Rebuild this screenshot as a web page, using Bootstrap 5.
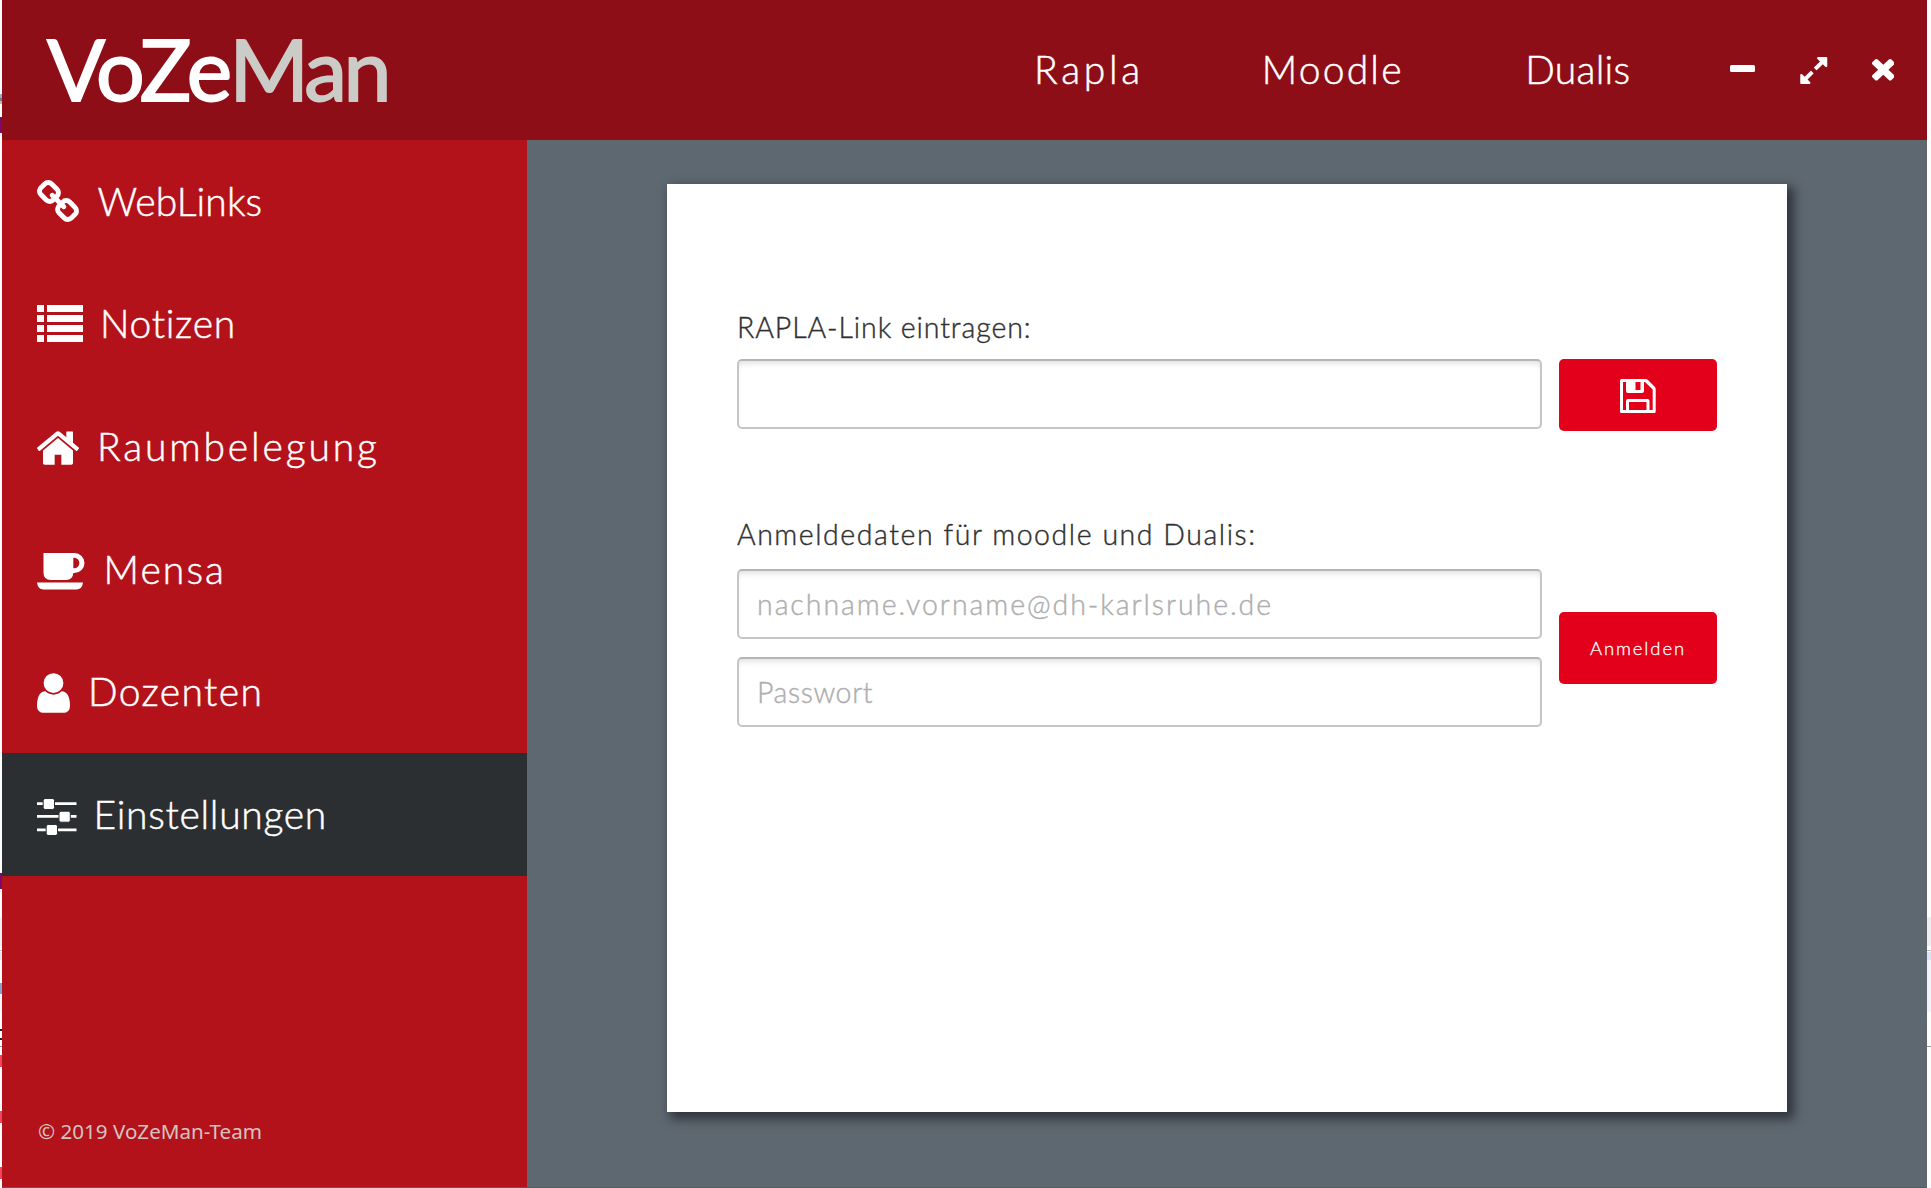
<!DOCTYPE html>
<html lang="de">
<head>
<meta charset="utf-8">
<title>VoZeMan</title>
<link href="https://cdn.jsdelivr.net/npm/bootstrap@5.3.0/dist/css/bootstrap.min.css" rel="stylesheet">
<style>
  body { background: #fff; font-family: Lato, "Liberation Sans", sans-serif; font-weight: 300; overflow: hidden; }
  svg { display: block; flex: none; fill: currentColor; }
  .app-window { width: 1925px; height: 1188px; background: #5e6870; border-bottom: 1px solid #535b63; }
  .edge { flex: none; background-repeat: no-repeat; }
  .edge-left { width: 2px; background-image: linear-gradient(
    #fff 94px, #8fb0c8 94px 98px, #77788c 98px 101px, #d9b98c 101px 104px, #fff 104px 117px,
    #7b0a6a 117px 133px, #fff 133px 873px, #7b0a6a 873px 889px, #fff 889px 917px,
    #f2f2f2 917px 946px, #fff 946px 950px, #bbb 950px 951px, #fff 951px 952px, #e6e8f4 952px 960px,
    #fff 960px 983px, #7fa8cc 983px 994px, #f8f8fc 994px 1012px, #fff 1012px 1029px, #222 1029px 1031px,
    #fff 1031px 1038px, #222 1038px 1040px, #fff 1040px 1046px, #999 1046px 1047px, #fff 1047px 1055px,
    #f0455a 1055px 1067px, #fff 1067px 1111px, #f0455a 1111px 1123px, #fff 1123px 1167px,
    #f0455a 1167px 1179px, #fff 1179px); }
  .edge-right { width: 4px; background-image: linear-gradient(
    #fff 917px, #eee 917px 946px, #fff 946px 950px, #bbb 950px 951px, #fff 951px 952px,
    #dde3f6 952px 960px, #f3f3fb 960px 1012px, #fff 1012px 1046px, #999 1046px 1047px, #fff 1047px); }

  .app-header { height: 140px; background: #8e0e17; color: #fff; padding: 0 32.6px 0 45px; }
  .logo { font-size: 86px; font-weight: 400; line-height: 1; letter-spacing: -2.8px; padding-bottom: 5px; -webkit-text-stroke: 1.8px; }
  .logo-grey { color: #cbcbc7; letter-spacing: -3.6px; }
  .top-link { color: #fff; font-size: 39px; line-height: 1.2; text-decoration: none; padding-bottom: 1px; -webkit-text-stroke: .5px; }
  .top-rapla { width: 227.7px; letter-spacing: 3.7px; }
  .top-moodle { width: 263.5px; letter-spacing: 2.2px; }
  .top-dualis { width: 204.6px; letter-spacing: .3px; }
  .win-btn { color: #fff; }

  .side { width: 525px; background: #b4121b; flex: none; }
  .side .nav-link { height: 122.6px; padding: 0 0 0 35px; gap: 17px; color: #fff; font-size: 39px; line-height: 1.2; -webkit-text-stroke: .5px; border-radius: 0; }
  .side .nav-link svg { stroke: none; }
  .side .nav-link.active { background: #2c2f32; }
  .copyright { font: 400 20.6px "Noto Sans", sans-serif; color: #d2c4c0; padding: 0 0 42px 36px; }

  .panel { width: 1120px; height: 928px; margin: 43.5px 0 0 140px; padding: 126.5px 70px 0; background: #fff; box-shadow: 5px 5px 10px 2px #30343c; }
  .field-label { color: #303030; font-size: 28.5px; line-height: 34px; -webkit-text-stroke: .4px; }
  .field { width: 805px; height: 70px; border: 2px solid #c6c6c6; border-top-color: #b5b5b5; border-radius: 5px; padding: 0 18px; font-size: 28.5px; font-weight: 300; box-shadow: inset 0 5px 6px -3px #ddd; -webkit-text-stroke: .4px; }
  .field::placeholder { color: #aeaeae; opacity: 1; }
  .btn-red { width: 158px; height: 72px; border: 0; border-radius: 5px; background: #e2001a; color: #fff; font-size: 18.5px; font-weight: 300; padding: 2px 0 0; }
  .btn-red:hover { background: #e2001a; color: #fff; }
</style>
<script src="https://cdn.jsdelivr.net/npm/bootstrap@5.3.0/dist/js/bootstrap.bundle.min.js"></script>
</head>
<body>
<div class="d-flex vh-100">
  <div class="edge edge-left"></div>
  <div class="app-window d-flex flex-column flex-shrink-0">
    <header class="app-header d-flex align-items-center">
      <div class="logo me-auto text-nowrap">VoZe<span class="logo-grey">Man</span></div>
      <a class="top-link top-rapla" href="#">Rapla</a>
      <a class="top-link top-moodle" href="#">Moodle</a>
      <a class="top-link top-dualis" href="#">Dualis</a>
      <a class="win-btn" href="#" aria-label="Minimieren"><svg width="25" height="7" viewBox="0 0 25 7" style="margin-bottom:3px"><rect width="25" height="7" rx="1.5"/></svg></a>
      <a class="win-btn" href="#" aria-label="Maximieren" style="margin:0 44px 0 45.5px"><svg width="27.5" height="27" viewBox="128 128 1536 1536"><path d="M883 1056q0 13-10 23l-332 332 144 144q19 19 19 45t-19 45-45 19h-448q-26 0-45-19t-19-45v-448q0-26 19-45t45-19 45 19l144 144 332-332q10-10 23-10t23 10l114 114q10 10 10 23zm781-864v448q0 26-19 45t-45 19-45-19l-144-144-332 332q-10 10-23 10t-23-10l-114-114q-10-10-10-23t10-23l332-332-144-144q-19-19-19-45t19-45 45-19h448q26 0 45 19t19 45z"/></svg></a>
      <a class="win-btn" href="#" aria-label="Schließen"><svg width="22.6" height="21.5" viewBox="302 366 1188 1188" preserveAspectRatio="none"><path d="M1490 1322q0 40-28 68l-136 136q-28 28-68 28t-68-28l-294-294-294 294q-28 28-68 28t-68-28l-136-136q-28-28-28-68t28-68l294-294-294-294q-28-28-28-68t28-68l136-136q28-28 68-28t68 28l294 294 294-294q28-28 68-28t68 28l136 136q28 28 28 68t-28 68l-294 294 294 294q28 28 28 68z"/></svg></a>
    </header>

    <div class="d-flex flex-grow-1">
      <aside class="side d-flex flex-column">
        <nav class="nav flex-column">
          <a class="nav-link d-flex align-items-center" href="#">
            <svg width="42" height="42" viewBox="80 16 1632 1632"><path d="M1520 1216q0-40-28-68l-208-208q-28-28-68-28-42 0-72 32 3 3 19 18.500t21.500 21.500 15 19 13 25.500 3.500 27.500q0 40-28 68t-68 28q-15 0-27.500-3.500t-25.500-13-19-15-21.500-21.500-18.500-19q-33 31-33 73 0 40 28 68l206 207q27 27 68 27 40 0 68-26l147-146q28-28 28-67zm-703-705q0-40-28-68l-206-207q-28-28-68-28-39 0-68 27l-147 146q-28 28-28 67 0 40 28 68l208 208q27 27 68 27 42 0 72-31-3-3-19-18.500t-21.500-21.500-15-19-13-25.500-3.500-27.500q0-40 28-68t68-28q15 0 27.500 3.500t25.500 13 19 15 21.500 21.500 18.500 19q33-31 33-73zm895 705q0 120-85 203l-147 146q-83 83-203 83-121 0-204-85l-206-207q-83-83-83-203 0-123 88-209l-88-88q-86 88-208 88-120 0-204-84l-208-208q-84-84-84-204t85-203l147-146q83-83 203-83 121 0 204 85l206 207q83 83 83 203 0 123-88 209l88 88q86-88 208-88 120 0 204 84l208 208q84 84 84 204z"/></svg>
            <span style="margin-left:1.5px;letter-spacing:.1px">WebLinks</span></a>
          <a class="nav-link d-flex align-items-center" href="#">
            <svg width="46" height="37" viewBox="0 0 46 37"><path d="M0 0h7v7H0zM10 0h36v7H10zM0 10h7v7H0zM10 10h36v7H10zM0 20h7v7H0zM10 20h36v7H10zM0 30h7v7H0zM10 30h36v7H10z"/></svg>
            <span style="letter-spacing:.7px">Notizen</span></a>
          <a class="nav-link d-flex align-items-center" href="#">
            <svg width="42" height="34" viewBox="89 253 1614 1283" style="margin-top:3px"><path d="M1472 992v480q0 26-19 45t-45 19h-384v-384h-256v384h-384q-26 0-45-19t-19-45v-480q0-1 .5-3t.5-3l575-474 575 474q1 2 1 6zm223-69l-62 74q-8 9-21 11h-3q-13 0-21-7l-692-577-692 577q-12 8-24 7-13-2-21-11l-62-74q-8-10-7-23.500t11-21.500l719-599q32-26 76-26t76 26l244 204v-195q0-14 9-23t23-9h192q14 0 23 9t9 23v408l219 182q10 8 11 21.500t-7 23.500z"/></svg>
            <span style="margin-left:1px;letter-spacing:2.85px">Raumbelegung</span></a>
          <a class="nav-link d-flex align-items-center" href="#">
            <svg width="47.5" height="37" viewBox="0 0 47.5 37" style="margin-top:5px"><path fill-rule="evenodd" d="M6.500 0H37.500a10 10 0 0 1 0 20H36.300q-.5 7-7.300 7H14q-7.500 0-7.500-7.500zM36.300 4.800v10.400h.9a5.200 5.200 0 0 0 0-10.400z"/><path d="M0 29.500h46q-1 7-6.500 7h-33q-5.500 0-6.500-7z"/></svg>
            <span style="margin-left:2px;letter-spacing:2.100px">Mensa</span></a>
          <a class="nav-link d-flex align-items-center" href="#">
            <svg width="33" height="40" viewBox="256 128 1280 1536" style="margin-top:3px"><path d="M1536 1399q0 109-62.500 187t-150.500 78h-854q-88 0-150.500-78t-62.500-187q0-85 8.500-160.500t31.500-152 58.500-131 94-89 134.500-34.500q131 128 313 128t313-128q76 0 134.500 34.500t94 89 58.500 131 31.500 152 8.500 160.500zm-256-887q0 159-112.500 271.500t-271.500 112.500-271.500-112.500-112.500-271.500 112.500-271.500 271.500-112.500 271.500 112.500 112.500 271.500z"/></svg>
            <span style="margin-left:1px;letter-spacing:1.400px">Dozenten</span></a>
          <a class="nav-link active d-flex align-items-center" href="#">
            <svg width="39.5" height="36" viewBox="0 0 39.5 36" style="margin-top:5px"><path d="M0 3.300h39.500V6H0zM0 16h39.500v2.700H0zM0 29.500h39.500v2.700H0z"/><g stroke="#2c2f32"><rect x="6.200" y="-.5" width="11.300" height="11" rx="2"/><rect x="22" y="12.200" width="11.300" height="11" rx="2"/><rect x="9.200" y="25.500" width="11.300" height="11" rx="2"/></g></svg>
            <span style="letter-spacing:.7px">Einstellungen</span></a>
        </nav>
        <div class="copyright mt-auto">© 2019 VoZeMan-Team</div>
      </aside>

      <main class="panel">
        <label class="field-label d-block" for="rapla" style="letter-spacing:.9px;margin-bottom:15px">RAPLA-Link eintragen:</label>
        <div class="d-flex justify-content-between">
          <input class="field form-control" id="rapla" type="text">
          <button class="btn btn-red d-flex align-items-center justify-content-center" type="button" aria-label="Speichern">
            <svg width="36" height="34" viewBox="0 0 36 34"><path fill-rule="evenodd" d="M1.500 0H25q2 0 3 1l6.500 6.500q1.200 1.200 1.200 3V32.500q0 1.500-1.500 1.500H1.500Q0 34 0 32.500v-31Q0 0 1.500 0zM3 3v28h3V22q0-2 2-2h19.500q2 0 2 2v9H32.700V10.500L25 3h-1v9q0 2-2 2H8q-2 0-2-2V3zM9 23v8h17.500v-8zM15.500 3v8H20.500V3z"/></svg>
          </button>
        </div>
        <label class="field-label d-block" for="user" style="letter-spacing:1.550px;margin:86px 0 18px">Anmeldedaten für moodle und Dualis:</label>
        <div class="d-flex justify-content-between align-items-center">
          <div class="d-flex flex-column" style="gap:17.500px">
            <input class="field form-control" id="user" type="text" placeholder="nachname.vorname@dh-karlsruhe.de" style="letter-spacing:1.950px">
            <input class="field form-control" type="password" placeholder="Passwort" style="letter-spacing:.6px">
          </div>
          <button class="btn btn-red" type="button" style="letter-spacing:1.900px;-webkit-text-stroke:.3px">Anmelden</button>
        </div>
      </main>
    </div>
  </div>
  <div class="edge edge-right"></div>
</div>
</body>
</html>
